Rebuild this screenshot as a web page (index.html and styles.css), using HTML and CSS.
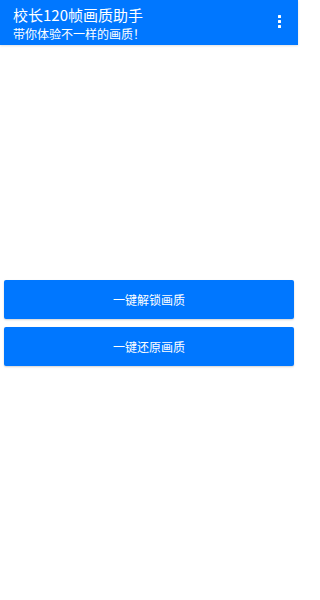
FILE: index.html
```html
<!DOCTYPE html>
<html lang="zh-CN">
<head>
<meta charset="utf-8">
<title>校长120帧画质助手</title>
<link rel="stylesheet" href="styles.css">
</head>
<body>
<div class="app">
  <header class="toolbar">
    <div class="titles">
      <div class="title">校长120帧画质助手</div>
      <div class="subtitle">带你体验不一样的画质！</div>
    </div>
    <div class="menu" aria-label="更多">
      <span class="dot"></span>
      <span class="dot"></span>
      <span class="dot"></span>
    </div>
  </header>
  <main class="content">
    <button class="btn">一键解锁画质</button>
    <button class="btn">一键还原画质</button>
  </main>
</div>
</body>
</html>
```
FILE: styles.css
```css
html, body {
  margin: 0;
  padding: 0;
  background: #ffffff;
}
body {
  font-family: "Noto Sans CJK SC", "Noto Sans", sans-serif;
}
.app {
  width: 298px;
  height: 600px;
  display: flex;
  flex-direction: column;
}
.toolbar {
  height: 45px;
  flex: none;
  box-sizing: border-box;
  background: #0077ff;
  color: #ffffff;
  display: flex;
  align-items: flex-start;
  justify-content: space-between;
  padding: 5px 0 0 13px;
  box-shadow: 0 1px 2px rgba(0, 0, 0, 0.12);
  position: relative;
  z-index: 1;
}
.titles {
  display: flex;
  flex-direction: column;
}
.title {
  font-size: 15px;
  line-height: 20px;
}
.subtitle {
  font-size: 12px;
  line-height: 16px;
  margin-top: 1px;
}
.menu {
  width: 40px;
  height: 40px;
  display: flex;
  flex-direction: column;
  align-items: center;
  justify-content: center;
  gap: 2px;
  padding-left: 3px;
  box-sizing: border-box;
  margin-top: -4px;
}
.dot {
  width: 3px;
  height: 3px;
  background: #ffffff;
  border-radius: 0.5px;
}
.content {
  flex: 1;
  display: flex;
  flex-direction: column;
  justify-content: center;
  gap: 8px;
  padding: 0 4px;
}
.btn {
  height: 39px;
  border: none;
  border-radius: 2px;
  background: #0077ff;
  color: #ffffff;
  font-family: "Noto Sans CJK SC", "Noto Sans", sans-serif;
  font-size: 12px;
  box-shadow: 0 1px 2px rgba(0, 0, 0, 0.18);
  padding: 0;
  margin: 0;
}
```
